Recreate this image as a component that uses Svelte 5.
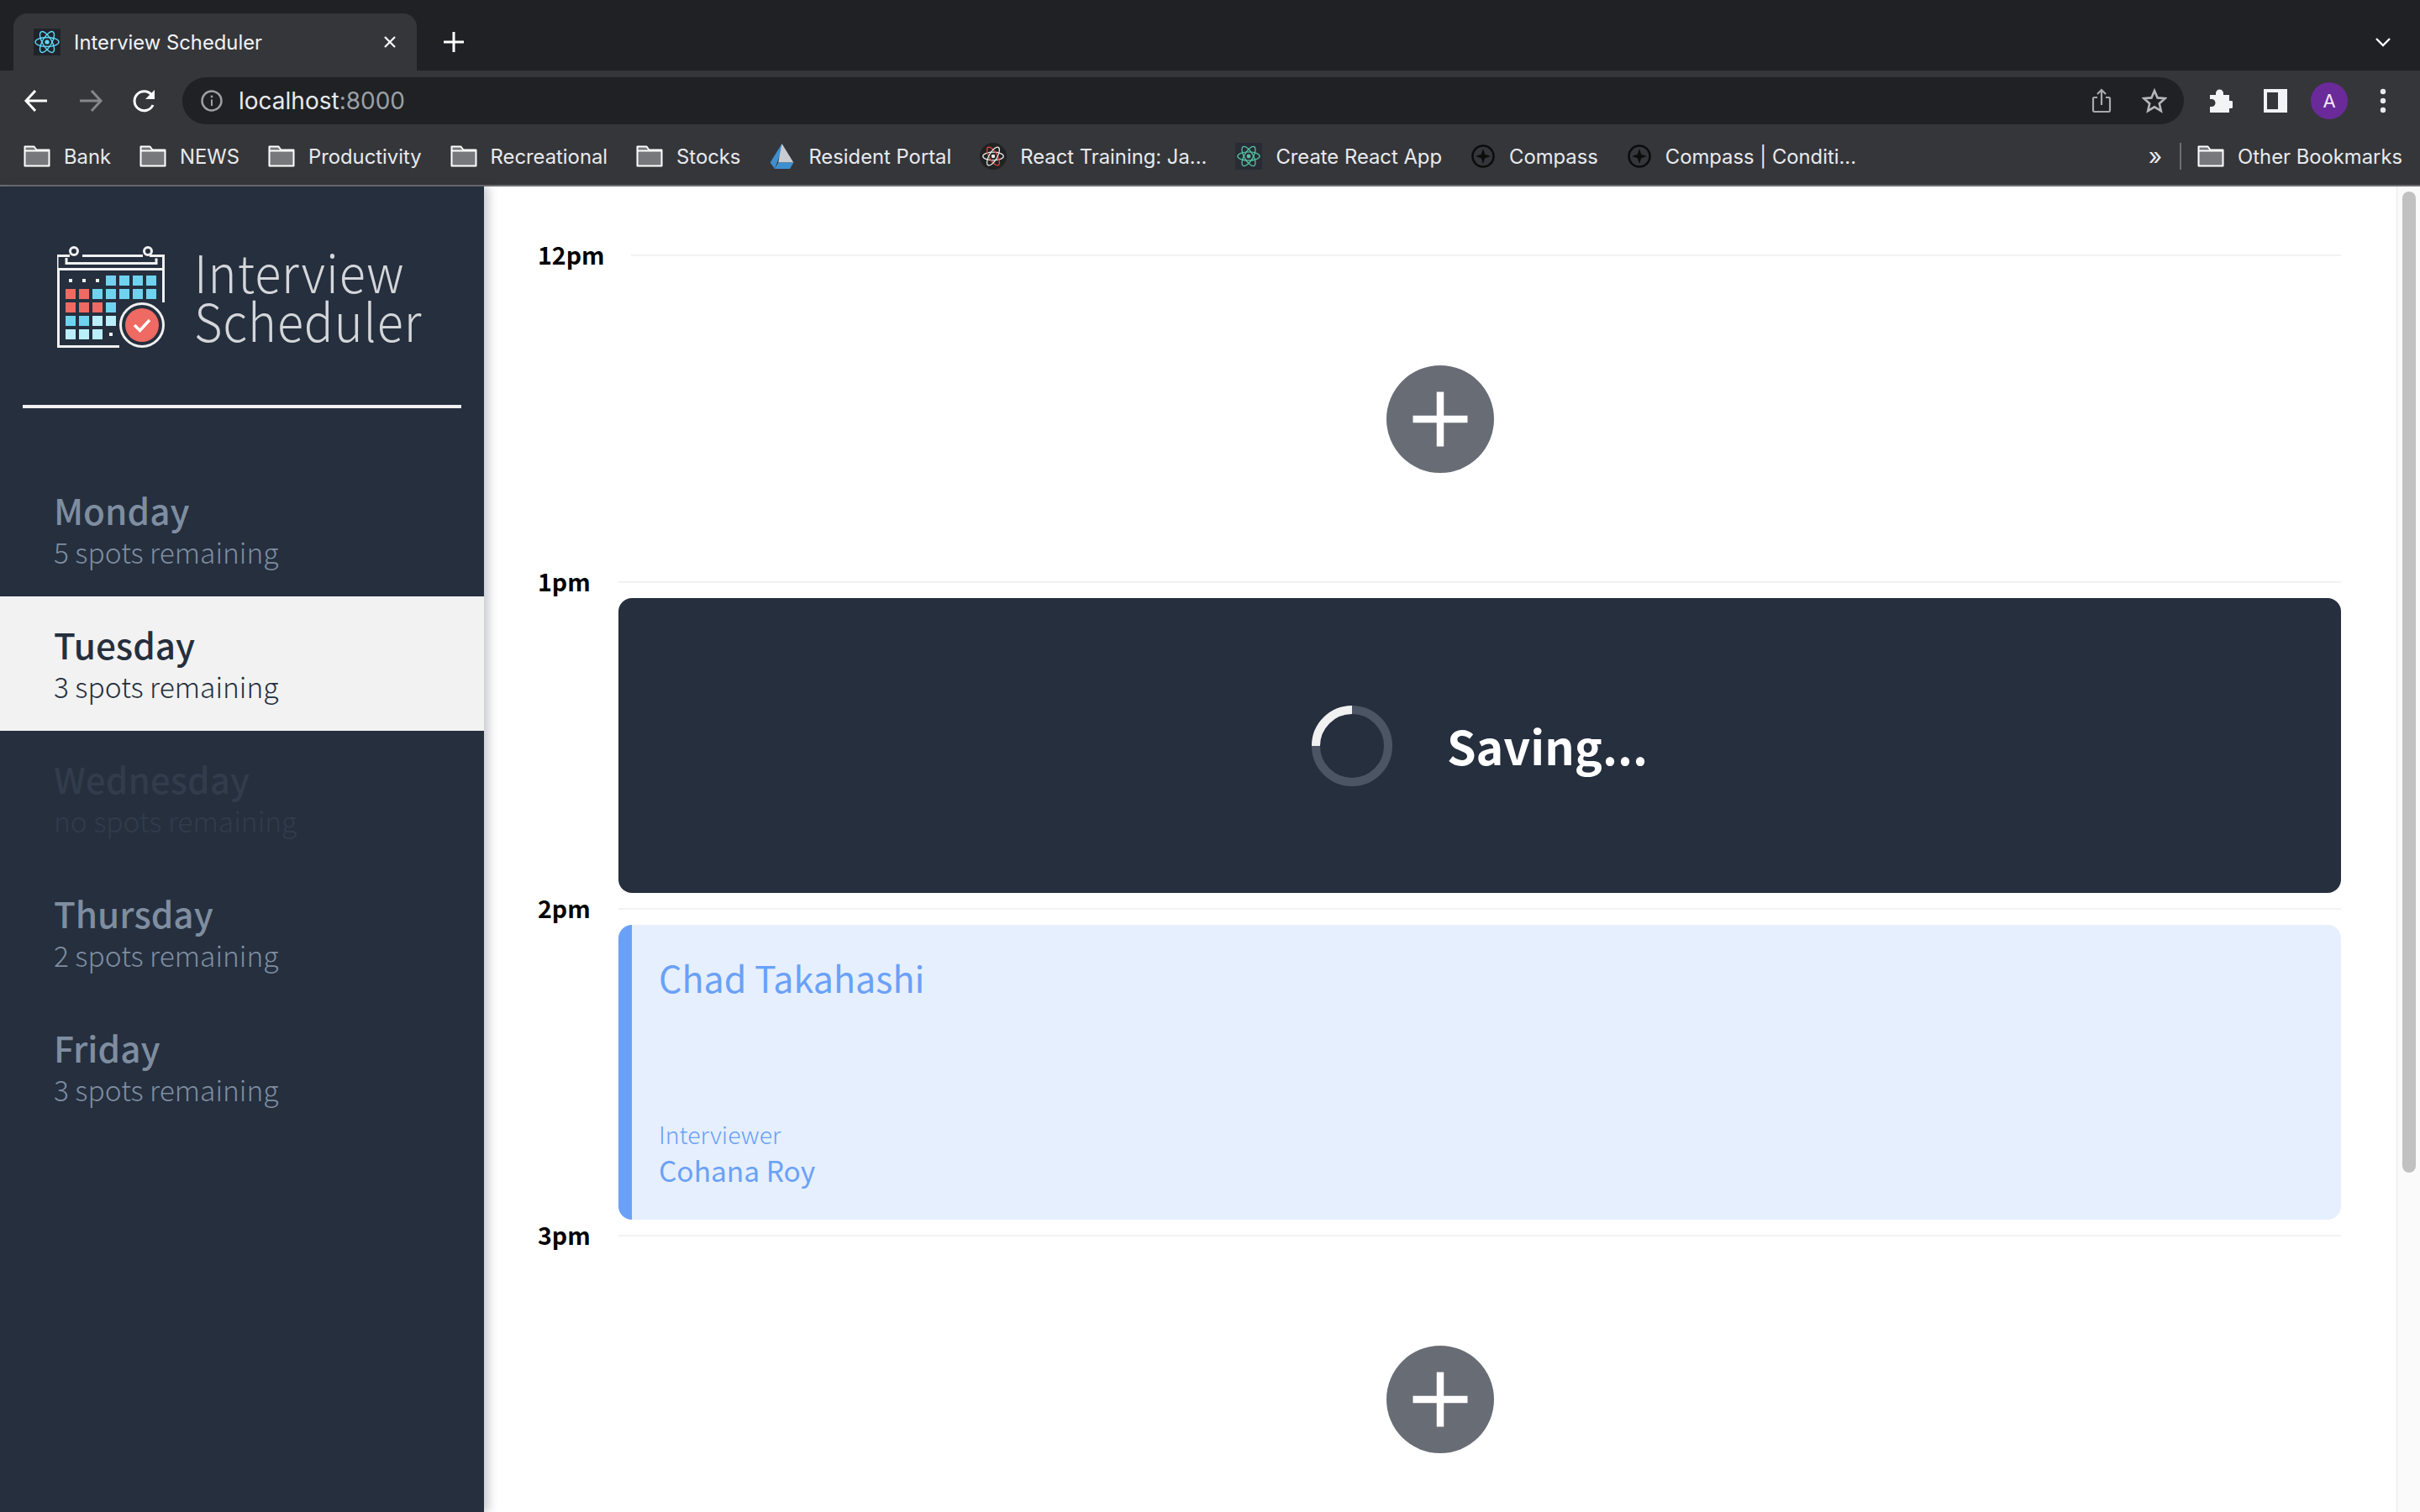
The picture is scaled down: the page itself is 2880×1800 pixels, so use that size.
<script>
  const folders = ['Bank', 'NEWS', 'Productivity', 'Recreational', 'Stocks'];
  const sites = [
    { name: 'React Training: Ja...', icon: 'red' },
    { name: 'Create React App', icon: 'green' },
    { name: 'Compass', icon: 'compass' },
    { name: 'Compass | Conditi...', icon: 'compass' }
  ];
  const days = [
    { name: 'Monday', spots: '5 spots remaining', state: '' },
    { name: 'Tuesday', spots: '3 spots remaining', state: 'selected' },
    { name: 'Wednesday', spots: 'no spots remaining', state: 'full' },
    { name: 'Thursday', spots: '2 spots remaining', state: '' },
    { name: 'Friday', spots: '3 spots remaining', state: '' }
  ];
  const blue = [
    [126, 328], [142, 328], [158, 328], [174, 328],
    [110, 344], [126, 344], [142, 344], [158, 344], [174, 344],
    [126, 360], [78, 376], [94, 376]
  ];
  const red = [[78, 344], [94, 344], [78, 360], [94, 360], [110, 360]];
  const pale = [[110, 376], [126, 376], [78, 392], [94, 392], [110, 392]];
  const dots = [[84, 334], [100, 334], [116, 334], [132, 398]];
</script>

{#snippet atom(color, size, second = color)}
  <svg class="atom" width={size} height={size} viewBox="0 0 32 32" fill="none" stroke={color} stroke-width="1.4">
    <ellipse cx="16" cy="16" rx="14" ry="5.5" />
    <ellipse cx="16" cy="16" rx="14" ry="5.5" transform="rotate(60 16 16)" stroke={second} />
    <ellipse cx="16" cy="16" rx="14" ry="5.5" transform="rotate(120 16 16)" />
    <circle cx="16" cy="16" r="2.6" fill={color} stroke="none" />
  </svg>
{/snippet}

{#snippet folder()}
  <svg class="folder" width="32" height="26" viewBox="0 0 32 26">
    <path d="M1.5 1.5h11l3 4h15v19h-29z" fill="#77787b" stroke="#fff" stroke-width="2" stroke-linejoin="round" />
    <path d="M1.5 6.5h29" stroke="#fff" stroke-width="2" />
  </svg>
{/snippet}

{#snippet compass()}
  <svg width="30" height="30" viewBox="0 0 30 30" fill="none">
    <circle cx="15" cy="15" r="12.5" stroke="#0c0c0c" stroke-width="2.6" />
    <path d="M15 6l2.2 6.8L24 15l-6.8 2.2L15 24l-2.2-6.8L6 15l6.8-2.2z" fill="#0c0c0c" />
  </svg>
{/snippet}

{#snippet add()}
  <div class="slot empty">
    <svg width="128" height="128" viewBox="0 0 128 128">
      <circle cx="64" cy="64" r="64" fill="#686c75" />
      <path d="M31.5 64h65M64 31.5v65" stroke="#fff" stroke-width="8.5" />
    </svg>
  </div>
{/snippet}

<div class="window">
  <div class="tabstrip">
    <div class="tab">
      <span class="favicon">{@render atom('#61dafb', 32)}</span>
      <span class="tab-title">Interview Scheduler</span>
      <svg class="tab-close" width="16" height="16" viewBox="0 0 16 16">
        <path d="M2 2l12 12M14 2L2 14" stroke="#fff" stroke-width="2.2" />
      </svg>
    </div>
    <svg class="new-tab" width="26" height="26" viewBox="0 0 26 26">
      <path d="M13 1v24M1 13h24" stroke="#fff" stroke-width="3" />
    </svg>
    <svg class="tab-menu" width="20" height="12" viewBox="0 0 20 12" fill="none">
      <path d="M2 2l8 8 8-8" stroke="#fff" stroke-width="2.4" />
    </svg>
  </div>

  <div class="toolbar">
    <svg width="30" height="30" viewBox="0 0 30 30" fill="none" stroke="#fff" stroke-width="3">
      <path d="M28 15H4M14 3L3 15l11 12" />
    </svg>
    <svg class="forward" width="30" height="30" viewBox="0 0 30 30" fill="none" stroke="#85878a" stroke-width="3">
      <path d="M2 15h24M16 3l11 12-11 12" />
    </svg>
    <svg class="reload" width="30" height="30" viewBox="0 0 30 30" fill="none">
      <path d="M25 20a11.5 11.5 0 1 1-1.5-12" stroke="#fff" stroke-width="3" />
      <path d="M27 2v11H16z" fill="#fff" />
    </svg>
    <div class="omnibox">
      <svg width="26" height="26" viewBox="0 0 26 26" fill="none">
        <circle cx="13" cy="13" r="11.5" stroke="#a0a1a3" stroke-width="2.4" />
        <path d="M13 11.5V19" stroke="#a0a1a3" stroke-width="2" />
        <circle cx="13" cy="8" r="1.4" fill="#a0a1a3" />
      </svg>
      <span class="url">localhost<span class="port">:8000</span></span>
      <svg class="share" width="24" height="30" viewBox="0 0 24 30" fill="none" stroke="#a8a9ab" stroke-width="2.2">
        <path d="M7 11H3.500a1.500 1.500 0 0 0-1.500 1.500v14A1.500 1.500 0 0 0 3.500 28h17a1.500 1.500 0 0 0 1.500-1.500v-14a1.500 1.500 0 0 0-1.500-1.500H17" />
        <path d="M12 20V2M7 7l5-5 5 5" />
      </svg>
      <svg class="star" width="30" height="30" viewBox="0 0 30 30" fill="none" stroke="#b6b7b9" stroke-width="2.600">
        <path d="M15 3l3.600 8.400 9 .8-6.800 6 2 8.800-7.800-4.700-7.800 4.700 2-8.800-6.800-6 9-.8z" stroke-linejoin="miter" />
      </svg>
    </div>
    <svg class="puzzle" width="30" height="30" viewBox="0 0 30 30">
      <path d="M3 8h7V6a4.500 4.500 0 0 1 9 0v2h7v7h2a4.500 4.500 0 0 1 0 9h-2v5H3v-7h2a4.500 4.500 0 0 0 0-9H3z" fill="#f1f3f4" />
    </svg>
    <svg class="panel" width="28" height="28" viewBox="0 0 28 28" fill="none">
      <rect x="2" y="2" width="24" height="24" stroke="#f1f3f4" stroke-width="4" />
      <rect x="17" y="2" width="9" height="24" fill="#f1f3f4" />
    </svg>
    <div class="avatar">A</div>
    <svg class="more" width="8" height="30" viewBox="0 0 8 30" fill="#e8eaed">
      <circle cx="4" cy="4" r="3.200" />
      <circle cx="4" cy="15" r="3.200" />
      <circle cx="4" cy="26" r="3.200" />
    </svg>
  </div>

  <div class="bookmarks">
    {#each folders as name}
      <span class="bookmark">{@render folder()}{name}</span>
    {/each}
    <span class="bookmark">
      <svg width="31" height="32" viewBox="0 0 28 30">
        <path d="M14 1L1 22l5 7L14 8z" fill="#3e8fd0" />
        <path d="M14 1l13 21H14l-4 0z" fill="#c9ccd0" />
        <path d="M6 29l4-7h17l-4 7z" fill="#3e8fd0" />
      </svg>
      Resident Portal
    </span>
    {#each sites as site}
      <span class="bookmark">
        {#if site.icon === 'red'}
          <span class="site-icon round">{@render atom('#e8e8e8', 28, '#e2453c')}</span>
        {:else if site.icon === 'green'}
          <span class="site-icon square">{@render atom('#53c1a1', 30)}</span>
        {:else}
          {@render compass()}
        {/if}
        {site.name}
      </span>
    {/each}
    <span class="overflow">»</span>
    <span class="divider"></span>
    <span class="bookmark other">{@render folder()}Other Bookmarks</span>
  </div>

  <div class="layout">
    <aside class="sidebar">
      <div class="brand">
        <svg class="logo" width="128" height="121" viewBox="68 293 128 121" fill="none">
          <g stroke="#f1f1f1" stroke-width="3">
            <path d="M69.500 322v90.500H142M68 320.500h125M194.500 303v57" />
            <path d="M68 322V304.500h15M98 304.500h72M178 304.500h18" />
            <path d="M79 307v6.500h107v-6" />
            <circle cx="88" cy="299" r="4.500" />
            <circle cx="176" cy="299" r="4.500" />
            <circle cx="169" cy="387" r="25.500" fill="#252f3e" />
          </g>
          {#each blue as [x, y]}
            <rect {x} {y} width="12" height="12" fill="#6fd3f0" />
          {/each}
          {#each red as [x, y]}
            <rect {x} {y} width="12" height="12" fill="#ee6a62" />
          {/each}
          {#each pale as [x, y]}
            <rect {x} {y} width="12" height="12" fill="#b9effb" />
          {/each}
          {#each dots as [x, y]}
            <rect x={x - 2} y={y - 2} width="4" height="4" fill="#f1f1f1" />
          {/each}
          <circle cx="169" cy="387" r="20" fill="#ee6a62" />
          <path d="M160 387l6.500 6.500L178 381" stroke="#fff" stroke-width="3.500" />
        </svg>
        <div class="brand-name"><div>Interview</div><div>Scheduler</div></div>
      </div>
      <hr class="rule" />
      <ul class="days">
        {#each days as day}
          <li class="day {day.state}">
            <h2>{day.name}</h2>
            <h3>{day.spots}</h3>
          </li>
        {/each}
      </ul>
    </aside>

    <main class="schedule">
      <div class="hours">
        <div class="hour"><span class="label">12pm</span><span class="line"></span></div>
        {@render add()}

        <div class="hour"><span class="label">1pm</span><span class="line"></span></div>
        <div class="slot saving">
          <svg class="spinner" width="96" height="96" viewBox="0 0 96 96" fill="none">
            <circle cx="48" cy="48" r="43" stroke="#4c5564" stroke-width="10" />
            <path d="M5 48A43 43 0 0 1 48 5" stroke="#f1f1f1" stroke-width="10" />
          </svg>
          <span class="saving-text">Saving...</span>
        </div>

        <div class="hour"><span class="label">2pm</span><span class="line"></span></div>
        <div class="slot booked">
          <div class="student">Chad Takahashi</div>
          <div>
            <div class="role">Interviewer</div>
            <div class="interviewer">Cohana Roy</div>
          </div>
        </div>

        <div class="hour"><span class="label">3pm</span><span class="line"></span></div>
        {@render add()}
      </div>
      <div class="scrollbar"><div class="thumb"></div></div>
    </main>
  </div>
</div>

<style>
  :global(body) {
    margin: 0;
    background: #fff;
    font-family: Inter, "Liberation Sans", sans-serif;
  }

  .window {
    width: 2880px;
    height: 1800px;
    display: flex;
    flex-direction: column;
    overflow: hidden;
  }

  /* browser chrome */
  .tabstrip {
    height: 84px;
    flex: none;
    box-sizing: border-box;
    padding: 16px 34px 0 16px;
    background: #202124;
    display: flex;
    align-items: flex-start;
  }

  .tab {
    width: 480px;
    height: 68px;
    box-sizing: border-box;
    padding: 0 24px;
    background: #35363a;
    border-radius: 16px 16px 0 0;
    display: flex;
    align-items: center;
  }

  .favicon {
    width: 32px;
    height: 32px;
    display: flex;
    background: #20232a;
  }

  .tab-title {
    margin-left: 16px;
    font-size: 23.8px;
    color: #f1f3f4;
  }

  .tab-close {
    margin-left: auto;
  }

  .new-tab {
    margin: 21px 0 0 31px;
  }

  .tab-menu {
    margin: 28px 0 0 auto;
  }

  .toolbar {
    height: 64px;
    flex: none;
    box-sizing: border-box;
    padding: 8px 30px 0 28px;
    background: #35363a;
    display: flex;
    align-items: center;
  }

  .forward {
    margin-left: 35px;
  }

  .reload {
    margin-left: 34px;
  }

  .omnibox {
    width: 2382px;
    height: 56px;
    margin-left: 30px;
    box-sizing: border-box;
    padding: 0 20px 0 22px;
    border-radius: 28px;
    background: #202124;
    display: flex;
    align-items: center;
  }

  .url {
    margin-left: 19px;
    font-size: 28px;
    color: #e8eaed;
  }

  .port {
    color: #9aa0a6;
  }

  .share {
    margin-left: auto;
  }

  .star {
    margin-left: 36px;
  }

  .puzzle {
    margin-left: 28px;
  }

  .panel {
    margin-left: 37px;
  }

  .avatar {
    width: 44px;
    height: 44px;
    margin-left: 28px;
    border-radius: 50%;
    background: #6a2a9a;
    color: #f4e8fb;
    font-size: 22px;
    display: flex;
    align-items: center;
    justify-content: center;
  }

  .more {
    margin-left: 38px;
  }

  .bookmarks {
    height: 74px;
    flex: none;
    box-sizing: border-box;
    border-bottom: 2px solid #6d6e71;
    padding: 4px 21px 0 28px;
    background: #35363a;
    display: flex;
    align-items: center;
    gap: 34px;
    font-size: 23.8px;
    color: #e8eaed;
  }

  .bookmark {
    display: flex;
    align-items: center;
    gap: 16px;
    white-space: nowrap;
  }

  .site-icon {
    width: 32px;
    height: 32px;
    display: flex;
    align-items: center;
    justify-content: center;
  }

  .round {
    border-radius: 50%;
    background: #222;
  }

  .square {
    background: #282c34;
  }

  .overflow {
    margin-left: auto;
    font-size: 28px;
  }

  .divider {
    width: 2px;
    height: 32px;
    margin: 0 -15px 0 -13px;
    background: #6d6e71;
  }

  /* scheduler app */
  .layout {
    flex: 1;
    min-height: 0;
    display: flex;
    font-family: "Noto Sans CJK SC", "Noto Sans CJK JP", sans-serif;
  }

  .sidebar {
    width: 576px;
    flex: none;
    position: relative;
    background: #252f3e;
    box-shadow: 6px 0 10px rgba(50, 55, 75, 0.25);
  }

  .brand {
    height: 260px;
    box-sizing: border-box;
    padding: 71px 0 0 68px;
    display: flex;
    gap: 35px;
  }

  .brand-name {
    font-size: 62px;
    font-weight: 300;
    line-height: 58px;
    letter-spacing: 1px;
    color: #d4d6d9;
    transform: scaleX(0.93);
    transform-origin: left;
  }

  .rule {
    width: 522px;
    height: 4px;
    margin: 0 0 0 27px;
    border: 0;
    background: #f1f1f1;
  }

  .days {
    margin: 64px 0 0;
    padding: 0;
    list-style: none;
  }

  .day {
    height: 160px;
    box-sizing: border-box;
    padding: 27px 0 0 64px;
    color: #7f8da0;
  }

  .day h2 {
    margin: 0;
    font-size: 42.3px;
    font-weight: 500;
    line-height: 59px;
  }

  .day h3 {
    margin: 0;
    font-size: 33.5px;
    font-weight: 300;
    line-height: 42px;
  }

  .selected {
    background: #f2f2f2;
    color: #252f3e;
  }

  .full {
    color: #323c4c;
  }

  .schedule {
    flex: 1;
    min-width: 0;
    display: flex;
  }

  .hours {
    flex: 1;
    min-width: 0;
    padding: 81px 66px 0 64px;
  }

  .hour {
    height: 2px;
    display: flex;
    align-items: center;
  }

  .label {
    min-width: 64px;
    margin-right: 32px;
    padding-bottom: 4px;
    font-size: 28.5px;
    font-weight: 700;
    color: #000;
  }

  .line {
    flex: 1;
    height: 2px;
    background: #f2f2f2;
  }

  .slot {
    height: 351px;
    margin: 18px 0 18px 96px;
    box-sizing: border-box;
    border-radius: 16px;
  }

  .empty {
    padding-right: 95px;
    display: flex;
    align-items: center;
    justify-content: center;
  }

  .saving {
    background: #252f3e;
    color: #fff;
    font-size: 55.5px;
    font-weight: 700;
    display: flex;
    align-items: center;
    justify-content: center;
    gap: 65px;
  }

  .saving-text {
    margin-bottom: 2px;
  }

  .booked {
    padding: 32px 32px 37px;
    border-left: 16px solid #6aa1f7;
    background: #e6effd;
    color: #6aa1f7;
    display: flex;
    flex-direction: column;
    justify-content: space-between;
  }

  .student {
    font-size: 43px;
    line-height: 60px;
  }

  .role {
    font-size: 28.5px;
    font-weight: 300;
    line-height: 42px;
  }

  .interviewer {
    font-size: 33.5px;
    line-height: 44px;
  }

  .scrollbar {
    width: 28px;
    flex: none;
    box-sizing: border-box;
    padding: 6px 5px 0 6px;
    border-left: 1px solid #e8e8e8;
    background: #fafafa;
  }

  .thumb {
    height: 1168px;
    border-radius: 8px;
    background: #c1c1c1;
  }
</style>
